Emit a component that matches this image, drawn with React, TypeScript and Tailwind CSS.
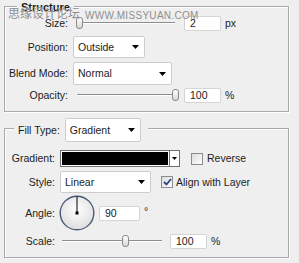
import React from 'react'

// Photoshop layer style panel: Structure + gradient fill options

const Arrow = () => (
  <svg width="7" height="4" viewBox="0 0 7 4">
    <path d="M0 0h7L3.5 4z" fill="#000" />
  </svg>
)

const Select = ({ value, className }: { value: string; className: string }) => (
  <div
    className={`flex items-center justify-between bg-white border border-[#cdcdcd] rounded-[2px] pl-[4px] pr-[5px] ${className}`}
  >
    <span>{value}</span>
    <Arrow />
  </div>
)

const NumField = ({ value, className = '' }: { value: string; className?: string }) => (
  <div
    className={`flex items-center h-[15px] bg-white border border-[#d4d4d4] rounded-[2px] pl-[5px] ${className}`}
  >
    {value}
  </div>
)

const Slider = ({ pos, className }: { pos: number; className: string }) => (
  <div className={`relative h-[12px] ${className}`}>
    <div className="absolute left-[1px] right-[6px] top-[5px] h-[2px] border-t border-[#8e8e8e] border-b border-b-white" />
    <div
      className="absolute top-0 h-[12px] w-[7px] rounded-[3px] border border-[#8a8a8a] bg-linear-to-b from-white to-[#d6d6d6]"
      style={{ left: pos }}
    />
  </div>
)

const Checkbox = ({ checked }: { checked?: boolean }) => (
  <div className="w-[12px] h-[12px] border border-[#8c8c8c] bg-linear-to-br from-[#dcdcdc] to-white flex items-center justify-center">
    {checked && (
      <svg width="9" height="8" viewBox="0 0 9 8">
        <path d="M1 4l2.5 2.5L8 1" stroke="#2c4585" strokeWidth="1.8" fill="none" />
      </svg>
    )}
  </div>
)

const AngleDial = () => (
  <svg width="36" height="36" viewBox="0 0 36 36">
    <defs>
      <radialGradient id="dial" cx="50%" cy="40%" r="60%">
        <stop offset="0%" stopColor="#ffffff" />
        <stop offset="100%" stopColor="#dedede" />
      </radialGradient>
    </defs>
    <circle cx="18" cy="18" r="16.8" fill="url(#dial)" stroke="#4a5a78" strokeWidth="1.4" />
    <line x1="18" y1="18" x2="18" y2="1.5" stroke="#000" strokeWidth="1" />
    <rect x="16.5" y="16.5" width="3" height="3" fill="#000" />
  </svg>
)

const App: React.FC = () => {
  return (
    <div className="relative w-[299px] h-[263px] overflow-hidden bg-[#efefef] pt-[6px] px-[4px] text-[10.5px] leading-none text-[#1c1c1c] font-['Liberation_Sans',Arial,sans-serif]">
      {/* Structure */}
      <div className="w-[285px] h-[106px] border border-[#a9a9a9] shadow-[inset_1px_1px_0_#fff,1px_1px_0_#fff]">
        <div className="-mt-[7px] h-[14px] flex items-center">
          <span className="ml-[12px] px-[4px] bg-[#efefef] font-bold text-[11px]">Structure</span>
        </div>

        <div className="mt-[1px] h-[16px] flex items-center">
          <span className="w-[63px] text-right">Size:</span>
          <Slider pos={0} className="ml-[8px] w-[105px]" />
          <NumField value="2" className="ml-[3px] w-[37px]" />
          <span className="ml-[4px]">px</span>
        </div>

        <div className="mt-[5px] h-[22px] flex items-center">
          <span className="w-[63px] text-right">Position:</span>
          <Select value="Outside" className="ml-[5px] w-[72px] h-[22px]" />
        </div>

        <div className="mt-[4px] h-[23px] flex items-center">
          <span className="w-[63px] text-right">Blend Mode:</span>
          <Select value="Normal" className="ml-[5px] w-[99px] h-[23px]" />
        </div>

        <div className="mt-[2px] h-[16px] flex items-center">
          <span className="w-[63px] text-right">Opacity:</span>
          <Slider pos={96} className="ml-[8px] w-[105px]" />
          <NumField value="100" className="ml-[3px] w-[37px]" />
          <span className="ml-[4px]">%</span>
        </div>
      </div>

      {/* Fill */}
      <div className="mt-[16px] w-[285px] h-[130px] border border-[#a9a9a9] shadow-[inset_1px_1px_0_#fff,1px_1px_0_#fff]">
        <div className="-mt-[11px] h-[24px] flex">
          <div className="ml-[9px] pl-[4px] pr-[7px] bg-[#efefef] flex items-center">
            <span>Fill Type:</span>
            <Select value="Gradient" className="ml-[5px] w-[76px] h-[24px]" />
          </div>
        </div>

        <div className="mt-[8px] h-[17px] flex items-center">
          <span className="w-[50px] text-right">Gradient:</span>
          <div className="ml-[5px] flex h-[17px] w-[120px] border border-[#6f6f6f] bg-white">
            <div className="flex-1 p-[1px] border-r border-[#6f6f6f]">
              <div className="h-full bg-black" />
            </div>
            <div className="w-[9px] flex items-center justify-center">
              <svg width="5" height="3" viewBox="0 0 5 3">
                <path d="M0 0h5L2.5 3z" fill="#000" />
              </svg>
            </div>
          </div>
          <div className="ml-[11px]">
            <Checkbox />
          </div>
          <span className="ml-[4px]">Reverse</span>
        </div>

        <div className="mt-[4px] h-[22px] flex items-center">
          <span className="w-[50px] text-right">Style:</span>
          <Select value="Linear" className="ml-[5px] w-[91px] h-[22px] pl-[3px]" />
          <div className="ml-[10px]">
            <Checkbox checked />
          </div>
          <span className="ml-[3px]">Align with Layer</span>
        </div>

        <div className="mt-[2px] h-[36px] flex items-center">
          <span className="w-[50px] text-right">Angle:</span>
          <div className="ml-[4px] flex">
            <AngleDial />
          </div>
          <NumField value="90" className="ml-[4px] w-[41px]" />
          <span className="ml-[4px] self-start mt-[11px]">°</span>
        </div>

        <div className="mt-[2px] h-[16px] flex items-center">
          <span className="w-[50px] text-right">Scale:</span>
          <Slider pos={61} className="ml-[6px] w-[107px]" />
          <NumField value="100" className="ml-[2px] w-[37px]" />
          <span className="ml-[4px]">%</span>
        </div>
      </div>

      {/* watermark over the panel */}
      <div className="absolute left-[8px] top-[7px] text-[12px] leading-none text-[#8b8b8b] [text-shadow:0_0_1px_#fff] font-['Noto_Sans_CJK_SC',sans-serif]">
        思缘设计论坛
      </div>
      <div className="absolute left-[85px] top-[11px] text-[10px] tracking-[0.3px] leading-none text-[#8e8e8e] font-['Liberation_Sans',Arial,sans-serif]">
        WWW.MISSYUAN.COM
      </div>
    </div>
  )
}

export default App
